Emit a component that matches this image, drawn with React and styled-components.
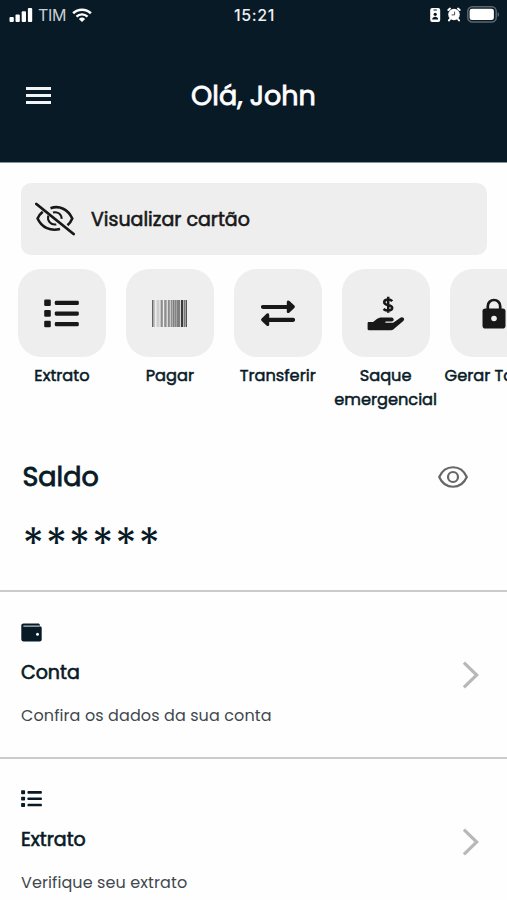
import React from "react";
import styled, { createGlobalStyle } from "styled-components";

const GlobalStyle = createGlobalStyle`
  * {
    box-sizing: border-box;
  }
  body {
    margin: 0;
    background-color: #fefefe;
    font-family: Poppins, Inter, sans-serif;
    color: #081a26;
    overflow: hidden;
  }
`;

const Screen = styled.div`
  width: 507px;
  height: 900px;
  overflow: hidden;
`;

const Header = styled.header`
  height: 163px;
  background-color: #081a26;
  border-bottom: 1px solid #84929a;
  color: #fff;
`;

const StatusBar = styled.div`
  height: 29px;
  padding: 0 7px 0 9px;
  display: grid;
  grid-template-columns: 1fr auto 1fr;
  align-items: center;
  font-family: Inter, sans-serif;
`;

const StatusGroup = styled.div`
  display: flex;
  align-items: center;
`;

const StatusItems = styled(StatusGroup)`
  justify-content: flex-end;
  gap: 6px;
`;

const Carrier = styled.span`
  margin: 0 6px 0 5px;
  font-size: 16px;
  letter-spacing: -0.3px;
  color: #c9d0d4;
`;

const Clock = styled.span`
  font-size: 16px;
  font-weight: 500;
  letter-spacing: 0.6px;
  color: #eef1f2;
`;

const TitleBar = styled.div`
  height: 132px;
  padding: 0 26px;
  display: grid;
  grid-template-columns: 1fr auto 1fr;
  align-items: center;
`;

const MenuButton = styled.button`
  width: 25px;
  height: 17px;
  padding: 0;
  border: none;
  background: none;
  display: flex;
  flex-direction: column;
  justify-content: space-between;
`;

const MenuLine = styled.span`
  height: 3px;
  background-color: #f2f4f5;
`;

const Title = styled.h1`
  margin: 0;
  padding-top: 1px;
  font-size: 27px;
  line-height: 40px;
  font-weight: 400;
  -webkit-text-stroke: 0.8px currentColor;
`;

const CardButton = styled.button`
  width: 466px;
  height: 72px;
  margin: 20px 0 0 21px;
  padding: 0 14px;
  border: none;
  border-radius: 10px;
  background-color: #eee;
  display: flex;
  align-items: center;
  gap: 16px;
  color: #181818;
  font-family: inherit;
  font-size: 19px;
  font-weight: 400;
  -webkit-text-stroke: 0.6px currentColor;
`;

const Actions = styled.div`
  display: flex;
  height: 152px;
  margin-top: 14px;
  padding-left: 8px;
  overflow: hidden;
`;

const Action = styled.div`
  flex: 0 0 107.9px;
  min-width: 0;
  display: flex;
  flex-direction: column;
  align-items: center;
`;

const Tile = styled.div`
  width: 88px;
  height: 88px;
  flex: none;
  border-radius: 23px;
  background-color: #eee;
  display: flex;
  align-items: center;
  justify-content: center;
`;

const ActionLabel = styled.span`
  margin-top: 7px;
  font-size: 16.2px;
  font-weight: 400;
  line-height: 24px;
  text-align: center;
  -webkit-text-stroke: 0.5px currentColor;
`;

const Balance = styled.section`
  height: 171px;
  padding: 34px 39px 0 22.5px;
  border-bottom: 2px solid #cbcbcb;
`;

const BalanceHead = styled.div`
  height: 44px;
  display: flex;
  align-items: center;
  justify-content: space-between;
`;

const BalanceTitle = styled(Title)`
  padding: 0 0 1px;
`;

const Hidden = styled.div`
  margin-top: 24px;
  height: 44px;
  font-size: 44px;
  line-height: 44px;
  letter-spacing: 1.8px;
`;

const Row = styled.section`
  height: 167px;
  padding: 29px 28px 0 21px;
  border-bottom: 2px solid #cbcbcb;
  display: flex;
  justify-content: space-between;
`;

const RowIcon = styled.div`
  height: 22px;
  display: flex;
  align-items: center;
`;

const RowTitle = styled.h2`
  margin: 16px 0 0;
  font-size: 19px;
  line-height: 28px;
  font-weight: 400;
  -webkit-text-stroke: 0.6px currentColor;
`;

const RowText = styled.p`
  margin: 16px 0 0;
  font-size: 16px;
  line-height: 26px;
  color: #3e484e;
  letter-spacing: 0.1px;
`;

const Arrow = styled.div`
  padding-top: 40px;
`;

const SignalIcon = () => (
  <svg width="24" height="16" viewBox="0 0 24 16" fill="#fff">
    <rect x="0.5" y="10" width="4.3" height="5" rx="1" />
    <rect x="6.5" y="7.5" width="4.3" height="7.5" rx="1" />
    <rect x="12.7" y="4.2" width="4.3" height="10.8" rx="1" />
    <rect x="18.9" y="1" width="4.3" height="14" rx="1" />
  </svg>
);

const WifiIcon = () => (
  <svg width="20" height="16" viewBox="0 0 21 16" fill="none" stroke="#fff">
    <path d="M1.2 6.2a13.3 13.3 0 0 1 18.6 0" strokeWidth="2.7" />
    <path d="M4.7 9.7a8.3 8.3 0 0 1 11.6 0" strokeWidth="2.5" />
    <path d="M7.2 12.1a4.9 4.9 0 0 1 6.6 0L10.5 15.4z" fill="#fff" stroke="none" />
  </svg>
);

const BadgeIcon = () => (
  <svg width="11" height="14" viewBox="0 0 11 14">
    <rect x="0.2" width="10" height="14" rx="2" fill="#fff" />
    <rect x="3.4" y="1.4" width="3.6" height="1.2" rx="0.6" fill="#081a26" />
    <circle cx="5.2" cy="6.3" r="1.6" fill="#081a26" />
    <path d="M2.2 11.5c0-3.8 6-3.8 6 0z" fill="#081a26" />
  </svg>
);

const AlarmIcon = () => (
  <svg width="14" height="15" viewBox="0 0 14 15">
    <circle cx="7" cy="7.5" r="5.8" fill="#fff" />
    <path
      d="M1.4 3 3 1.6M12.6 3 11 1.6M3 12l-1 1.4M11 12l1 1.4"
      stroke="#fff"
      strokeWidth="2"
      strokeLinecap="round"
    />
    <path d="M7.6 4.6v3.3H4.6" fill="none" stroke="#45535c" strokeWidth="1" />
  </svg>
);

const BatteryIcon = () => (
  <svg width="33" height="17" viewBox="0 0 33 17">
    <rect x="0.8" y="0.8" width="28.4" height="15.2" rx="4.5" fill="none" stroke="#59666e" strokeWidth="1.5" />
    <rect x="2.6" y="2.8" width="24.3" height="11.2" rx="2.3" fill="#fff" />
    <path d="M30.6 6.2c2 .5 2 4 0 4.6z" fill="#59666e" />
  </svg>
);

const EyeOffIcon = () => (
  <svg width="40" height="34" viewBox="0 0 40 34" fill="none" stroke="#181818" strokeWidth="2.6">
    <path d="M15.5 6.2C24.5 3 33 7.5 37.3 16.5c-1.2 2.8-2.7 5-4.8 6.8" />
    <path d="M7.7 9.8C5.5 11.6 3.8 13.7 2.6 16.5 6.7 25.8 15.8 29.5 25 27" />
    <path d="M18 10.5c4.8-1.3 8.8 1.8 8.6 6.4" strokeWidth="2" />
    <path d="M13.3 13.6c-1.5 5.2 2.5 9.7 8 8.8" strokeWidth="2" />
    <path d="M1.4 2 38.6 32" strokeWidth="2.8" strokeLinecap="round" />
  </svg>
);

const ListIcon = ({ size = 35, color = "#181818" }) => (
  <svg width={size} height={(size * 29) / 35} viewBox="0 0 35 29" fill={color}>
    <rect x="0.2" y="0.5" width="6.6" height="6.6" rx="1.3" />
    <rect x="0.2" y="11.1" width="6.6" height="6.6" rx="1.3" />
    <rect x="0.2" y="21.7" width="6.6" height="6.6" rx="1.3" />
    <rect x="10.8" y="1.8" width="24" height="4.3" rx="1.4" />
    <rect x="10.8" y="12.4" width="24" height="4.3" rx="1.4" />
    <rect x="10.8" y="23" width="24" height="4.3" rx="1.4" />
  </svg>
);

// x, width, shade
const bars = [
  [0, 1.2, "#666"],
  [1.2, 1.4, "#a5a5a5"],
  [4.5, 3, "#cdcdcd"],
  [8.6, 2.2, "#8c8c8c"],
  [12.2, 2.4, "#8e8e8e"],
  [15.8, 2, "#8b8b8b"],
  [18.6, 1.5, "#8f8f8f"],
  [20.5, 2.1, "#7d7d7d"],
  [22.9, 1.8, "#858585"],
  [25, 3.2, "#7f7f7f"],
  [29, 2.2, "#3a3a3a"],
  [31.8, 1.2, "#777"],
  [33.5, 1.5, "#555"],
];

const BarcodeIcon = () => (
  <svg width="35" height="27" viewBox="0 0 35 27">
    {bars.map(([x, width, fill]) => (
      <rect key={x} x={x} width={width} height="27" fill={fill} />
    ))}
  </svg>
);

const TransferIcon = () => (
  <svg width="34" height="27" viewBox="0 0 34 27" fill="#181818">
    <path d="M2 4.9h23.8V2.1C25.8.4 27.4-.1 28.5.9l4.8 4.6c.8.8.8 1.6 0 2.4l-4.8 4.7c-1.1 1-2.7.5-2.7-1.1V9H2a2 2 0 0 1 0-4.1z" />
    <path d="M32 17.8H8.2V15c0-1.7-1.6-2.2-2.7-1.2L.7 18.5c-.8.8-.8 1.6 0 2.4l4.8 4.7c1.1 1 2.7.5 2.7-1.1v-2.6H32a2 2 0 0 0 0-4.1z" />
  </svg>
);

const MoneyHandIcon = () => (
  <svg width="39" height="35" viewBox="-1.3 0 39 35" fill="#181818">
    <path
      d="M25 5.2C23.8 4 22.4 3.5 20.8 3.5c-2.2 0-3.9 1.1-3.9 2.8 0 4 8 1.9 8 5.5 0 1.9-1.8 2.8-4.1 2.8-1.8 0-3.3-.5-4.6-1.6M20.9.8v16"
      fill="none"
      stroke="#181818"
      strokeWidth="2.5"
    />
    <path d="M1.5 26h4.3l3.4-2.7c1.5-1.2 3.4-1.7 5.3-1.7h9.8c2.8 0 2.8 4 0 4h-5.6c-1 0-1 1.2 0 1.2h7.2l6.8-4.9c2.6-1.9 5.6.9 3.3 3l-8 6.8c-1.2 1-2.6 2.5-4.2 2.5H1.5C.8 34.2.3 33.7.3 33v-5.8c0-.7.5-1.2 1.2-1.2z" />
  </svg>
);

const LockIcon = () => (
  <svg width="24" height="31" viewBox="0 0 24 31">
    <path d="M5.8 13V8.2a6.2 6.2 0 0 1 12.4 0V13" fill="none" stroke="#181818" strokeWidth="2.7" />
    <rect x="0.5" y="10.5" width="23" height="20" rx="2.8" fill="#181818" />
    <circle cx="12" cy="20.5" r="2.8" fill="#eee" />
  </svg>
);

const EyeIcon = () => (
  <svg width="30" height="22" viewBox="0 0 30 22" fill="none" stroke="#666" strokeWidth="2.2">
    <path d="M1.2 11C7-2 23-2 28.8 11 23 24 7 24 1.2 11z" strokeLinejoin="round" />
    <circle cx="15" cy="11" r="5" />
  </svg>
);

const WalletIcon = () => (
  <svg width="21" height="19" viewBox="0 0 21 19">
    <path
      d="M2.6.5h14.6c.9 0 1.6.6 1.6 1.4v1.4c1.2 0 1.9.7 1.9 1.8v11.3c0 1.2-.8 2-2 2H2.6C1.2 18.4.3 17.5.3 16V2.8C.3 1.4 1.2.5 2.6.5z"
      fill="#081a26"
    />
    <path d="M2.8 3.1h15.5" stroke="#b9c1c5" strokeWidth="1.2" strokeLinecap="round" />
    <circle cx="16.5" cy="11.2" r="1.5" fill="#fff" />
  </svg>
);

const ChevronIcon = () => (
  <svg width="17" height="28" viewBox="0 0 17 28" fill="none" stroke="#b8b8b8" strokeWidth="3.2">
    <path d="M1.9 1.7 14.7 14 1.9 26.3" />
  </svg>
);

const actions = [
  { label: "Extrato", icon: <ListIcon /> },
  { label: "Pagar", icon: <BarcodeIcon /> },
  { label: "Transferir", icon: <TransferIcon /> },
  { label: "Saque emergencial", icon: <MoneyHandIcon /> },
  { label: "Gerar Token", icon: <LockIcon /> },
];

const rows = [
  { title: "Conta", text: "Confira os dados da sua conta", icon: <WalletIcon /> },
  { title: "Extrato", text: "Verifique seu extrato", icon: <ListIcon size={21} color="#081a26" /> },
];

const App = () => {
  return (
    <Screen>
      <GlobalStyle />
      <Header>
        <StatusBar>
          <StatusGroup>
            <SignalIcon />
            <Carrier>TIM</Carrier>
            <WifiIcon />
          </StatusGroup>
          <Clock>15:21</Clock>
          <StatusItems>
            <BadgeIcon />
            <AlarmIcon />
            <BatteryIcon />
          </StatusItems>
        </StatusBar>
        <TitleBar>
          <MenuButton aria-label="Menu">
            <MenuLine />
            <MenuLine />
            <MenuLine />
          </MenuButton>
          <Title>Olá, John</Title>
        </TitleBar>
      </Header>
      <CardButton>
        <EyeOffIcon />
        Visualizar cartão
      </CardButton>
      <Actions>
        {actions.map(({ label, icon }) => (
          <Action key={label}>
            <Tile>{icon}</Tile>
            <ActionLabel>{label}</ActionLabel>
          </Action>
        ))}
      </Actions>
      <Balance>
        <BalanceHead>
          <BalanceTitle as="h2">Saldo</BalanceTitle>
          <EyeIcon />
        </BalanceHead>
        <Hidden>******</Hidden>
      </Balance>
      {rows.map(({ title, text, icon }) => (
        <Row key={title}>
          <div>
            <RowIcon>{icon}</RowIcon>
            <RowTitle>{title}</RowTitle>
            <RowText>{text}</RowText>
          </div>
          <Arrow>
            <ChevronIcon />
          </Arrow>
        </Row>
      ))}
    </Screen>
  );
};

export default App;
